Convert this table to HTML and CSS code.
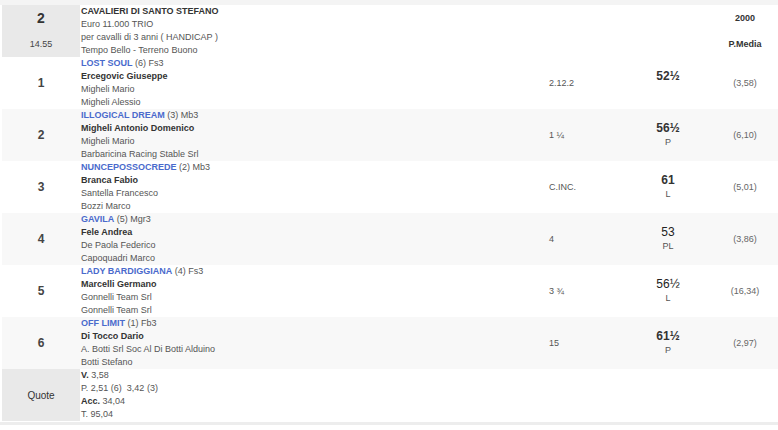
FILE: index.html
```html
<!DOCTYPE html>
<html>
<head>
<meta charset="utf-8">
<link rel="stylesheet" href="styles.css">
</head>
<body>
<div class="topbar"></div>
<table class="race">
  <colgroup>
    <col class="c1"><col class="c2"><col class="c3"><col class="c4"><col class="c5">
  </colgroup>
  <tr class="head">
    <td class="num-cell grey">
      <div class="race-no">2</div>
      <div class="race-time">14.55</div>
    </td>
    <td class="info">
      <div class="line title">CAVALIERI DI SANTO STEFANO</div>
      <div class="line">Euro 11.000 TRIO</div>
      <div class="line">per cavalli di 3 anni ( HANDICAP )</div>
      <div class="line">Tempo Bello - Terreno Buono</div>
    </td>
    <td></td>
    <td></td>
    <td class="right-head">
      <div class="rh">2000</div>
      <div class="rh">P.Media</div>
    </td>
  </tr>
  <tr class="row">
    <td class="pos">1</td>
    <td class="info">
      <div class="line"><span class="horse">LOST SOUL</span> (6) Fs3</div>
      <div class="line jockey">Ercegovic Giuseppe</div>
      <div class="line">Migheli Mario</div>
      <div class="line">Migheli Alessio</div>
    </td>
    <td class="gap">2.12.2</td>
    <td class="wt"><div class="w">52½</div><div class="wsub">&nbsp;</div></td>
    <td class="odds">(3,58)</td>
  </tr>
  <tr class="row alt">
    <td class="pos">2</td>
    <td class="info">
      <div class="line"><span class="horse">ILLOGICAL DREAM</span> (3) Mb3</div>
      <div class="line jockey">Migheli Antonio Domenico</div>
      <div class="line">Migheli Mario</div>
      <div class="line">Barbaricina Racing Stable Srl</div>
    </td>
    <td class="gap">1 ¼</td>
    <td class="wt"><div class="w">56½</div><div class="wsub">P</div></td>
    <td class="odds">(6,10)</td>
  </tr>
  <tr class="row">
    <td class="pos">3</td>
    <td class="info">
      <div class="line"><span class="horse">NUNCEPOSSOCREDE</span> (2) Mb3</div>
      <div class="line jockey">Branca Fabio</div>
      <div class="line">Santella Francesco</div>
      <div class="line">Bozzi Marco</div>
    </td>
    <td class="gap">C.INC.</td>
    <td class="wt"><div class="w">61</div><div class="wsub">L</div></td>
    <td class="odds">(5,01)</td>
  </tr>
  <tr class="row alt">
    <td class="pos">4</td>
    <td class="info">
      <div class="line"><span class="horse">GAVILA</span> (5) Mgr3</div>
      <div class="line jockey">Fele Andrea</div>
      <div class="line">De Paola Federico</div>
      <div class="line">Capoquadri Marco</div>
    </td>
    <td class="gap">4</td>
    <td class="wt"><div class="w light">53</div><div class="wsub">PL</div></td>
    <td class="odds">(3,86)</td>
  </tr>
  <tr class="row">
    <td class="pos">5</td>
    <td class="info">
      <div class="line"><span class="horse">LADY BARDIGGIANA</span> (4) Fs3</div>
      <div class="line jockey">Marcelli Germano</div>
      <div class="line">Gonnelli Team Srl</div>
      <div class="line">Gonnelli Team Srl</div>
    </td>
    <td class="gap">3 ¾</td>
    <td class="wt"><div class="w light">56½</div><div class="wsub">L</div></td>
    <td class="odds">(16,34)</td>
  </tr>
  <tr class="row alt">
    <td class="pos">6</td>
    <td class="info">
      <div class="line"><span class="horse">OFF LIMIT</span> (1) Fb3</div>
      <div class="line jockey">Di Tocco Dario</div>
      <div class="line">A. Botti Srl Soc Al Di Botti Alduino</div>
      <div class="line">Botti Stefano</div>
    </td>
    <td class="gap">15</td>
    <td class="wt"><div class="w">61½</div><div class="wsub">P</div></td>
    <td class="odds">(2,97)</td>
  </tr>
  <tr class="quote">
    <td class="num-cell grey quote-label">Quote</td>
    <td class="info">
      <div class="line"><b>V.</b> 3,58</div>
      <div class="line">P. 2,51 (6)&nbsp; 3,42 (3)</div>
      <div class="line"><b>Acc.</b> 34,04</div>
      <div class="line">T. 95,04</div>
    </td>
    <td></td>
    <td></td>
    <td></td>
  </tr>
</table>
<div class="bottombar"></div>
</body>
</html>
```

FILE: styles.css
```css
html, body {
  margin: 0;
  padding: 0;
  background: #ffffff;
  font-family: "Liberation Sans", Arial, sans-serif;
  color: #333333;
}

.topbar {
  height: 5px;
  background: #f4f4f4;
}

.race {
  margin-left: 2px;
  width: 776px;
  border-collapse: collapse;
  table-layout: fixed;
  font-size: 9px;
}

.c1 { width: 78px; }
.c2 { width: 465px; }
.c3 { width: 79px; }
.c4 { width: 88px; }
.c5 { width: 66px; }

.race td {
  padding: 0;
  vertical-align: middle;
}

.grey {
  background: #e9e9e9;
}

.alt td {
  background: #f8f8f8;
}

.num-cell {
  text-align: center;
}

.race-no {
  height: 26px;
  line-height: 26px;
  font-size: 14px;
  font-weight: bold;
  color: #333;
}

.race-time {
  height: 26px;
  line-height: 26px;
  font-size: 9px;
  color: #444;
}

.info {
  padding-left: 1px !important;
}

.line {
  height: 13px;
  line-height: 13px;
  white-space: nowrap;
  color: #555;
}

.title {
  font-weight: bold;
  color: #333;
}

.horse {
  color: #4a6acc;
  font-weight: bold;
}

.jockey {
  font-weight: bold;
  color: #333;
}

.line b {
  color: #333;
}

.right-head {
  text-align: center;
}

.rh {
  height: 26px;
  line-height: 26px;
  font-weight: bold;
  color: #333;
}

.pos {
  text-align: center;
  font-size: 12px;
  font-weight: bold;
  color: #444;
}

.gap {
  padding-left: 4px !important;
  color: #555;
}

.wt {
  text-align: center;
}

.w {
  font-size: 12px;
  font-weight: bold;
  line-height: 15px;
  color: #333;
}

.w.light {
  font-weight: normal;
  color: #222;
}

.wsub {
  font-size: 9px;
  line-height: 13px;
  color: #555;
}

.odds {
  text-align: center;
  color: #666;
}

.quote-label {
  font-size: 10px;
  color: #333;
}

.bottombar {
  height: 3px;
  margin-top: 1px;
  background: #ededed;
}
```
